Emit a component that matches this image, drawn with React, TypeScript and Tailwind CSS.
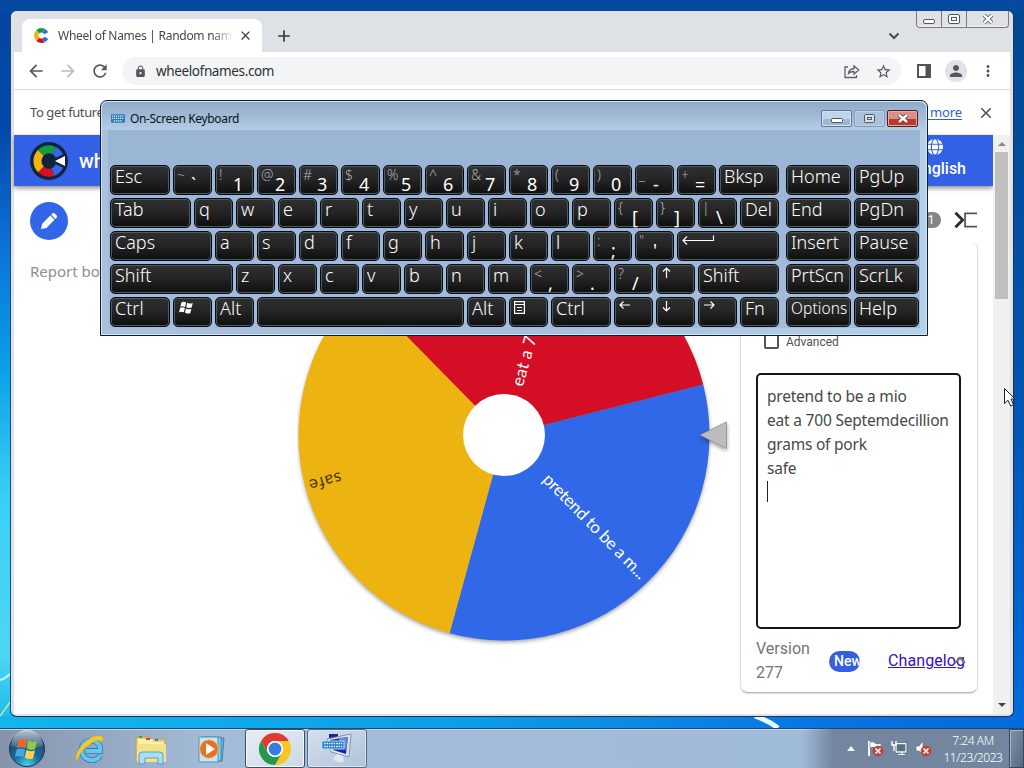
import React from "react";
import { MdArrowBack, MdArrowForward, MdRefresh, MdLock, MdStarBorder, MdPerson, MdMoreVert, MdClose, MdAdd } from "react-icons/md";

type KeyDef = { label?: string; top?: string; w?: string; icon?: React.ReactNode; small?: boolean };

const stroke = { fill: "none", stroke: "#fff", strokeWidth: 1.2 };

const arrow = (d: string) => (
  <svg className="absolute left-[4px] top-[1px] h-[14px] w-[14px]" viewBox="0 0 14 14" {...stroke}>
    <path d={d} />
  </svg>
);

const WinFlag = () => (
  <svg className="absolute left-[5px] top-[3px] h-[14px] w-[15px]" viewBox="0 0 16 15" fill="#fff">
    <path d="M2.5 1.5 Q5 .2 7.5 1.6 L6.5 6.3 Q4 5 1.4 6.2Z M8.7 2 Q11 3.4 14.7 2.1 L13.5 7 Q10.5 8.2 7.7 6.7Z M1.2 7.4 Q4 6.2 6.3 7.5 L5.2 12 Q3 10.8 0 12Z M7.4 8 Q10 9.4 13.2 8.2 L12 13 Q9 14 6.4 12.6Z" />
  </svg>
);

const MenuIcon = () => (
  <svg className="absolute left-[4px] top-[3px] h-[13px] w-[11px]" viewBox="0 0 11 13" {...stroke}>
    <path d="M.6 .6H10.4V12.4H.6ZM.6 3.5H10.4M3 6.5H8M3 9.5H8" />
  </svg>
);

const EnterIcon = () => (
  <svg className="absolute left-[4px] top-[3px] h-[12px] w-[33px]" viewBox="0 0 33 12" {...stroke}>
    <path d="M31.5 .5V5.5H1M5 1.5L1 5.5L5 9.5" />
  </svg>
);

const letters = (s: string): KeyDef[] => s.split("").map((label) => ({ label }));
const duo = (top: string, label: string): KeyDef => ({ top, label });

const rows: KeyDef[][] = [
  [{ label: "Esc", w: "w-[60px]" }, duo("~", "`"), duo("!", "1"), duo("@", "2"), duo("#", "3"), duo("$", "4"), duo("%", "5"), duo("^", "6"), duo("&", "7"), duo("*", "8"), duo("(", "9"), duo(")", "0"), duo("_", "-"), duo("+", "="), { label: "Bksp", w: "w-[60px]" }],
  [{ label: "Tab", w: "w-[81px]" }, ...letters("qwertyuiop"), duo("{", "["), duo("}", "]"), duo("|", "\\"), { label: "Del" }],
  [{ label: "Caps", w: "w-[102px]" }, ...letters("asdfghjkl"), duo(":", ";"), duo("\"", "'"), { w: "w-[102px]", icon: <EnterIcon /> }],
  [{ label: "Shift", w: "w-[123px]" }, ...letters("zxcvbnm"), duo("<", ","), duo(">", "."), duo("?", "/"), { icon: arrow("M5.5 12V2M2 5.5L5.5 2L9 5.5") }, { label: "Shift", w: "w-[81px]" }],
  [{ label: "Ctrl", w: "w-[60px]" }, { icon: <WinFlag /> }, { label: "Alt" }, { w: "w-[207px]" }, { label: "Alt" }, { icon: <MenuIcon /> }, { label: "Ctrl", w: "w-[60px]" }, { icon: arrow("M11 6H1M4.5 2.5L1 6L4.5 9.5") }, { icon: arrow("M5.5 2V12M2 8.5L5.5 12L9 8.5") }, { icon: arrow("M1 6H11M7.5 2.5L11 6L7.5 9.5") }, { label: "Fn" }],
];

const sideRows: string[][] = [["Home", "PgUp"], ["End", "PgDn"], ["Insert", "Pause"], ["PrtScn", "ScrLk"], ["Options", "Help"]];

function Key({ label, top, w = "w-[39px]", icon, small }: KeyDef) {
  return (
    <div className={`relative h-[30px] shrink-0 rounded-[5px] border border-[#050b12] bg-linear-to-b from-[#303030] via-[#242424] via-50% to-[#0e0e0e] font-light text-white shadow-[inset_0_0_0_1px_#4c5a62] ${w}`}>
      {top ? (
        <>
          <span className="absolute left-[3px] top-0 text-[14px] leading-[17px] text-[#b0b0b0]">{top}</span>
          <span className="absolute left-[17px] top-[8px] text-[18px] font-normal leading-[20px]">{label}</span>
        </>
      ) : (
        label && <span className={`absolute left-[4px] whitespace-nowrap ${small ? "-top-px text-[15.5px] leading-[23px] tracking-[0.1px]" : "-top-px text-[18px] leading-[23px]"}`}>{label}</span>
      )}
      {icon}
    </div>
  );
}

function KeyboardWindow() {
  return (
    <div className="absolute left-[100px] top-[100px] z-20 flex h-[236px] w-[828px] flex-col rounded-t-[7px] border border-[#0d1d30] bg-linear-to-r from-[#a9c1dc] via-[#a6bddb] to-[#b5d1e9] px-[7px] shadow-[inset_0_0_0_1px_#d5e4f3]">
      <div className="-mx-[6px] mt-px flex h-[28px] items-start rounded-t-[6px] bg-linear-to-b from-[#8faac8] to-[#b5cce5] pl-[9px] pt-[10px]">
        <svg className="mt-[2px] h-[9px] w-[14px]" viewBox="0 0 15 9">
          <rect width="15" height="9" rx="1" fill="#2f77c0" />
          <path d="M1 2H14M1 4.4H14M3 7H12" stroke="#d9ecff" strokeWidth="1.2" strokeDasharray="1.3 .8" />
        </svg>
        <span className="ml-[5px] text-[12px] leading-[13px] tracking-[-0.35px] text-[#0a1420]">On-Screen Keyboard</span>
        <div className="-mt-[2px] ml-auto mr-[8px] flex gap-[2px]">
          <div className="flex h-[17px] w-[31px] items-center justify-center rounded-[2px] border border-[#5d7693] bg-linear-to-b from-[#c2d4e8] from-50% to-[#9eb6d0] to-50% shadow-[inset_0_0_0_1px_#d6e3f1]">
            <svg className="mt-[3px] h-[5px] w-[12px]" viewBox="0 0 12 5"><rect x=".5" y=".5" width="11" height="4" rx="1" fill="#fff" stroke="#45566b" /></svg>
          </div>
          <div className="flex h-[17px] w-[31px] items-center justify-center rounded-[2px] border border-[#829ab5] bg-[#aac1da] shadow-[inset_0_0_0_1px_#bed1e5]">
            <svg className="h-[9px] w-[11px]" viewBox="0 0 11 9" fill="none" stroke="#4b5968"><rect x=".5" y=".5" width="10" height="8" rx="1" fill="#d7e0e9" /><rect x="3.5" y="3.5" width="4" height="2" /></svg>
          </div>
          <div className="flex h-[17px] w-[31px] items-center justify-center rounded-[2px] border border-[#4d1b20] bg-linear-to-b from-[#dc8e83] from-50% to-[#bd3828] to-50% shadow-[inset_0_0_0_1px_#e4aca5]">
            <svg className="h-[9px] w-[12px]" viewBox="0 0 12 9"><path d="M2 1L10 8M10 1L2 8" stroke="#4d3640" strokeWidth="4" /><path d="M2 1L10 8M10 1L2 8" stroke="#fff" strokeWidth="2.4" /></svg>
          </div>
        </div>
      </div>
      <div className="flex h-[198px] gap-[7px] bg-linear-to-b from-[#9ab4d3] to-[#a5bbdc] pl-[2px] pt-[35px]">
        <div className="flex w-[669px] flex-col gap-[3px]">
          {rows.map((row, i) => (
            <div key={i} className="flex gap-[3px]">{row.map((k, j) => <Key key={j} {...k} />)}</div>
          ))}
        </div>
        <div className="flex flex-col gap-[3px]">
          {sideRows.map((row) => (
            <div key={row[0]} className="flex gap-[3px]">{row.map((l) => <Key key={l} label={l} w="w-[65px]" small={l === "Options"} />)}</div>
          ))}
        </div>
      </div>
    </div>
  );
}

const Logo = ({ className, ring }: { className: string; ring?: boolean }) => (
  <svg className={className} viewBox="-19 -19 38 38">
    {ring && <circle r="19" fill="#10243c" />}
    <g fill="none" strokeWidth={ring ? 8 : 10}>
      <path d="M-8.2 -8.2A11.6 11.6 0 0 1 5 -10.5" stroke="#169b42" />
      <path d="M-8 8.4A11.6 11.6 0 0 1 -8.2 -8.2" stroke="#eeb211" />
      <path d="M4 10.9A11.6 11.6 0 0 1 -8 8.4" stroke="#d50f25" />
      <path d="M5 -10.5A11.6 11.6 0 0 1 10.5 -5M10.5 5A11.6 11.6 0 0 1 4 10.9" stroke="#3369e8" />
    </g>
    {ring ? <path d="M6 0L16 -5V5Z" fill="#fff" /> : <circle r="3" fill="#fff" />}
  </svg>
);

const Globe = () => (
  <svg className="-ml-[10px] mt-[1px] h-[16px] w-[16px]" viewBox="0 0 16 16">
    <circle cx="8" cy="8" r="8" fill="#fff" />
    <g fill="none" stroke="#3261e6" strokeWidth="1.1"><ellipse cx="8" cy="8" rx="3.6" ry="8.2" /><path d="M0 5.3H16M0 10.7H16" /></g>
  </svg>
);

function Tabs() {
  return (
    <div className="flex h-[41px] rounded-t-[5px] bg-[#dee1e6] pl-[8px]">
      <div className="relative mt-[8px] flex h-[33px] w-[240px] items-center rounded-t-[8px] bg-white pl-[11px]">
        <Logo className="h-[17px] w-[17px] shrink-0" />
        <span className="ml-[8px] w-[175px] overflow-hidden whitespace-nowrap text-[12px] tracking-[-0.28px] text-[#45494d] mask-r-from-88%">Wheel of Names | Random name picker</span>
        <MdClose className="ml-[5px] size-[15px] text-[#3c4043]" />
      </div>
      <MdAdd className="ml-[12px] mt-[15px] size-[20px] text-[#35383b]" />
      <svg className="ml-auto mt-[20px] h-[10px] w-[12px]" viewBox="0 0 12 10" fill="none" stroke="#45484c" strokeWidth="2"><path d="M1.5 2.5L6 7L10.5 2.5" /></svg>
      <div className="ml-[16px] mr-[1px] flex h-[17px] w-[93px] rounded-b-[4px] border border-t-0 border-[#777b80] shadow-[inset_0_-1px_0_#f4f4f4]">
        <div className="flex w-[25px] items-center justify-center border-r border-[#777b80] pt-[4px]">
          <svg className="h-[5px] w-[12px]" viewBox="0 0 12 5"><rect x=".5" y=".5" width="11" height="4" rx="1.5" fill="#fff" stroke="#555" /></svg>
        </div>
        <div className="flex w-[25px] items-center justify-center border-r border-[#777b80]">
          <svg className="h-[10px] w-[12px]" viewBox="0 0 12 10" fill="#fff" stroke="#555"><rect x=".5" y=".5" width="11" height="9" rx="1.5" /><rect x="3.5" y="3.5" width="5" height="3" /></svg>
        </div>
        <div className="flex flex-1 items-center justify-center">
          <svg className="h-[10px] w-[12px]" viewBox="0 0 12 10"><path d="M2 1L10 9M10 1L2 9" stroke="#666" strokeWidth="4" /><path d="M2 1L10 9M10 1L2 9" stroke="#fff" strokeWidth="2.3" /></svg>
        </div>
      </div>
    </div>
  );
}

function Toolbar() {
  return (
    <div className="flex h-[38px] items-center border-b border-[#d8dadd] bg-white pl-[12px] pr-[13px] pt-px text-[#55585c]">
      <MdArrowBack className="size-[20px]" />
      <MdArrowForward className="ml-[12px] size-[20px] text-[#bbbdc0]" />
      <MdRefresh className="ml-[12px] size-[20px]" />
      <div className="ml-[12px] flex h-[28px] w-[779px] items-center rounded-full bg-[#f3f4f5] pl-[12px] pr-[9px]">
        <MdLock className="size-[13px]" />
        <span className="ml-[9px] text-[13.5px] tracking-[-0.37px] text-[#2d3033]">wheelofnames.com</span>
        <svg className="ml-auto h-[15px] w-[16px]" viewBox="0 0 16 15" fill="none" stroke="#5f6368" strokeWidth="1.3">
          <path d="M4 3H1V13.5H12.5V11M4.5 9.5C4.8 6.5 6.8 4.8 10 4.5V2L14.8 6L10 10V7.5C7.5 7.4 6 8 4.5 9.5Z" />
        </svg>
        <MdStarBorder className="ml-[15px] size-[17px]" />
      </div>
      <svg className="ml-[16px] h-[14px] w-[14px]" viewBox="0 0 14 14"><rect x="1" y="1" width="12" height="12" fill="none" stroke="#505357" strokeWidth="2" /><rect x="8.5" width="5.5" height="14" fill="#505357" /></svg>
      <div className="ml-[14px] flex size-[22px] items-center justify-center rounded-full bg-[#dfe2e6]"><MdPerson className="size-[18px]" /></div>
      <MdMoreVert className="ml-auto size-[18px]" />
    </div>
  );
}

function Wheel() {
  return (
    <svg className="h-[528px] w-[443px] shrink-0" viewBox="297 186 443 528">
      <defs>
        <filter id="wheelShadow" x="-10%" y="-10%" width="120%" height="120%"><feDropShadow dx="0" dy="2" stdDeviation="2" floodColor="#000" floodOpacity=".4" /></filter>
      </defs>
      <circle cx="504" cy="435" r="205" fill="#888" filter="url(#wheelShadow)" />
      <path d="M504 435L703.2 384.5A205.5 205.5 0 0 1 449.6 633.2Z" fill="#3168e8" />
      <path d="M504 435L449.6 633.2A205.5 205.5 0 0 1 360 288.4Z" fill="#edb310" />
      <path d="M504 435L360 288.4A205.5 205.5 0 0 1 703.2 384.5Z" fill="#d40f25" />
      <circle cx="504" cy="435" r="41" fill="#fff" />
      <g fontFamily="Lato, sans-serif" fontSize="17">
        <text transform="translate(504 435) rotate(45.5)" x="59" y="5" fill="#fff" textLength="140">pretend to be a m...</text>
        <text transform="translate(504 435) rotate(-74.2)" x="51" y="5" fill="#fff" textLength="146">eat a 700 Septem...</text>
        <text transform="translate(504 435) rotate(165.6)" x="168" y="5" fill="#4a3804" textLength="33">safe</text>
      </g>
      <path d="M700 435L726.5 422V448.5Z" fill="#bcbcbc" stroke="#8a8a8a" strokeWidth=".7" filter="url(#wheelShadow)" />
    </svg>
  );
}

function EntryPanel() {
  return (
    <div className="flex w-[253px] flex-col">
      <div className="flex h-[56px] items-center justify-end pr-[15px] pt-[12px]">
        <span className="flex h-[16px] w-[20px] items-center justify-center rounded-full bg-[#858585] font-['Roboto',sans-serif] text-[12px] text-white">1</span>
        <svg className="ml-[13px] h-[18px] w-[24px]" viewBox="0 0 25 18" fill="none"><path d="M1.5 1.5L9 9L1.5 16.5" stroke="#2d2d2d" strokeWidth="3" /><path d="M24 2H11.5V16H24" stroke="#555" strokeWidth="1.8" /></svg>
      </div>
      <div className="flex h-[451px] w-[238px] flex-col rounded-[8px] border border-t-0 border-[#dedede] border-b-[#b5b5b5] px-[15px] shadow-[0_1px_2px_#ddd]">
        <div className="mt-[91px] flex h-[17px] items-center font-['Roboto',sans-serif] text-[12px] text-[#4f4f4f]">
          <span className="ml-[8px] mr-[7px] size-[15px] rounded-[2px] border-2 border-[#555]" />
          Advanced
        </div>
        <div className="mt-[23px] h-[256px] w-[205px] whitespace-nowrap rounded-[5px] border-2 border-[#161616] pl-[9px] pt-[9px] text-[15.5px] leading-[24px] tracking-[-0.22px] text-[#474747]">
          <div>pretend to be a mio</div>
          <div className="tracking-[-0.2px]">eat a 700 Septemdecillion</div>
          <div>grams of pork</div>
          <div>safe</div>
          <div className="mt-px h-[21px] w-px bg-[#222]" />
        </div>
        <div className="relative mt-[8px] flex items-center whitespace-nowrap font-['Roboto',sans-serif] text-[16px] leading-[24px] text-[#747474]">
          <div className="w-[73px] shrink-0">Version<br />277</div>
          <div className="h-[21px] w-[31px] shrink-0 overflow-hidden rounded-full bg-[#355fe0] pl-[5px] text-[14px] font-medium leading-[20px] text-white">New</div>
          <a className="ml-[28px] tracking-[0.1px] text-[#3511c4] underline">Changelog</a>
          <svg className="absolute right-[-5px] top-[19px] h-[8px] w-[14px]" viewBox="0 0 14 8" fill="none" stroke="#777" strokeWidth="2"><path d="M2 7L7 2L12 7" /></svg>
        </div>
      </div>
    </div>
  );
}

function Browser() {
  return (
    <div className="absolute left-[11px] top-[11px] flex h-[706px] w-[1003px] flex-col rounded-[6px] border-r border-b border-[#17335c] bg-[#dfe1e5] px-[3px] pb-[2px] shadow-[-1px_0_0_#1e4a82]">
      <div className="-mx-[3px] rounded-t-[6px] bg-[#dee1e6] px-[3px]"><Tabs /></div>
      <Toolbar />
      <div className="flex h-[45px] items-center bg-white pl-[16px] pr-[15px] text-[13px] tracking-[-0.4px] text-[#4b4e51] shadow-[0_1px_0_#d4d4d4]">
        <span className="w-[71px] overflow-hidden whitespace-nowrap">To get future</span>
        <a className="ml-auto tracking-[-0.1px] text-[#315fc6] underline underline-offset-2">Learn more</a>
        <MdClose className="ml-[15px] size-[18px] text-[#4e4e4e]" />
      </div>
      <div className="flex min-h-0 flex-1 bg-white">
        <div className="flex w-[979px] flex-col">
          <header className="flex h-[51px] shrink-0 items-center bg-[#3261e6] pl-[16px] pr-[27px] font-['Roboto',sans-serif] font-medium text-white shadow-[0_2px_5px_#888]">
            <Logo ring className="h-[38px] w-[38px]" />
            <span className="ml-[11px] text-[20px]">wheelofnames.com</span>
            <div className="-mt-[3px] ml-auto flex flex-col items-center gap-[2px] text-[16px] leading-[24px]"><Globe />English</div>
          </header>
          <div className="flex min-h-0 flex-1">
            <div className="flex w-[283px] shrink-0 flex-col pl-[16px] pt-[16px]">
              <div className="flex size-[38px] items-center justify-center rounded-full bg-[#3266e8]">
                <svg className="h-[18px] w-[18px]" viewBox="0 0 18 18" fill="#fff"><path d="M1 17L2.2 11.7L10.3 3.6L14.5 7.8L6.4 15.9ZM11.2 2.7L12.6 1.3Q13.5 .5 14.5 1.3L16.8 3.6Q17.6 4.5 16.8 5.5L15.4 6.9Z" /></svg>
              </div>
              <span className="mt-[19px] text-[15px] leading-[24px] text-[#8e8e8e]">Report board</span>
            </div>
            <Wheel />
            <EntryPanel />
          </div>
        </div>
        <div className="flex w-[17px] flex-col items-center bg-[#f0f0f0] py-[7px]">
          <svg className="h-[4px] w-[8px]" viewBox="0 0 8 4"><path d="M0 4L4 0L8 4Z" fill="#888" /></svg>
          <div className="mt-[6px] h-[147px] w-[13px] bg-[#bfbfbf]" />
          <svg className="mt-auto h-[4px] w-[8px]" viewBox="0 0 8 4"><path d="M0 0H8L4 4Z" fill="#444" /></svg>
        </div>
      </div>
    </div>
  );
}

const RedX = () => <g><circle cx="11" cy="11" r="5" fill="#d03b31" stroke="#9b4542" strokeWidth=".6" /><path d="M8.5 8.5L13.5 13.5M13.5 8.5L8.5 13.5" stroke="#fff" strokeWidth="1.6" /></g>;

function Taskbar() {
  return (
    <div className="relative z-10 flex h-[40px] items-center border-t border-[#264868] bg-linear-to-r from-[#8694ab] via-[#a3bbd8] via-[20%] to-[#a0bad9] to-[80%] shadow-[inset_0_1px_0_#c5d8e9]">
      <svg className="ml-[8px] h-[38px] w-[38px]" viewBox="0 0 38 38">
        <defs>
          <radialGradient id="orb" cx=".5" cy=".95" r=".85"><stop stopColor="#42d3ed" /><stop offset=".45" stopColor="#18699c" /><stop offset="1" stopColor="#274461" /></radialGradient>
          <linearGradient id="shine" x2="0" y2="1"><stop stopColor="#e9f3f8" stopOpacity=".75" /><stop offset="1" stopColor="#fff" stopOpacity=".08" /></linearGradient>
        </defs>
        <circle cx="19" cy="19" r="17.5" fill="url(#orb)" stroke="#20364d" />
        <path d="M3 16A16 16 0 0 1 35 16Q19 21 3 16Z" fill="url(#shine)" />
        <path d="M11 10Q15 8 19 10L17.5 18Q13 16 9 18Z" fill="#ef6428" />
        <path d="M20.3 10.5Q24 13 29 11L27 19Q23 21 18.8 18.5Z" fill="#91c848" />
        <path d="M8.5 19.5Q13 17.5 17 19.5L15.5 27Q12 25 7 27Z" fill="#45a8e4" />
        <path d="M18.4 20Q22 22 27 20.5L25 28.5Q21 30 16.8 27.5Z" fill="#ffd04a" />
      </svg>
      <svg className="ml-[28px] h-[32px] w-[31px]" viewBox="0 0 32 32" fill="none">
        <path d="M27 23C22 31 7 28 8 16C9 5 27 4 27 16V18H12" stroke="#2484bd" strokeWidth="6" />
        <path d="M27 23C22 31 7 28 8 16C9 5 27 4 27 16V18H12" stroke="#68c5ed" strokeWidth="4.2" />
        <path d="M3 29C-3 21 17 -2 29 3C31 4 30 7 28 10C28 1 6 15 3 29Z" fill="#f0ca34" stroke="#c8a11f" strokeWidth=".5" />
      </svg>
      <svg className="ml-[30px] mt-[2px] h-[30px] w-[32px]" viewBox="0 0 32 30">
        <path d="M1 2H13L15 4H30V26H1Z" fill="#e9cf74" stroke="#bd9d48" /><path d="M3 4H18V7H29V23H3Z" fill="#fff0ad" />
        <path d="M4 2H7" stroke="#38a44d" strokeWidth="2" /><path d="M11 4H15" stroke="#d6422e" strokeWidth="2" /><path d="M20 5H23" stroke="#3b80b1" strokeWidth="2" />
        <path d="M2 9H31V27H2Z" fill="#f7e08a" /><path d="M4 29V20Q4 17 8 17H25Q28 17 28 20V29H23V23H10V29Z" fill="#a9ddf1" stroke="#51a2c7" />
      </svg>
      <svg className="ml-[30px] mt-[1px] h-[28px] w-[29px]" viewBox="0 0 29 28">
        <path d="M9 3H27L25 26H9Z" fill="#67b9d9" stroke="#4081a3" /><path d="M5 2H24V26H5Z" fill="#86cee8" stroke="#458bb0" /><path d="M2 2H21V27H2Z" fill="#c5e5f2" stroke="#4e94b9" />
        <circle cx="12" cy="14" r="9.3" fill="#e8711d" stroke="#f8c391" strokeWidth=".8" /><path d="M9 8L18 14L9 20Z" fill="#fff" />
      </svg>
      <div className="ml-[19px] flex h-[39px] w-[60px] items-center justify-center rounded-[3px] border border-[#3c4d64] bg-linear-to-br from-[#e7edf5] to-[#ccd8e8] shadow-[inset_0_0_0_1px_#f5f8fc]">
        <svg className="h-[32px] w-[32px]" viewBox="-16 -16 32 32">
          <path d="M-13.86 -8A16 16 0 0 1 13.86 -8L0 -8A8 8 0 0 0 -6.93 4Z" fill="#df3b30" />
          <path d="M13.86 -8A16 16 0 0 1 0 16L6.93 4A8 8 0 0 0 0 -8Z" fill="#f9c721" />
          <path d="M0 16A16 16 0 0 1 -13.86 -8L-6.93 4A8 8 0 0 0 6.93 4Z" fill="#239a4b" />
          <circle r="8" fill="#fff" /><circle r="6.4" fill="#377de2" />
        </svg>
      </div>
      <div className="ml-[2px] flex h-[39px] w-[60px] items-center justify-center rounded-[3px] border border-[#566981] bg-linear-to-br from-[#d5dfec] to-[#b0c2da] shadow-[inset_0_0_0_1px_#d7e4f1]">
        <svg className="h-[32px] w-[32px]" viewBox="0 0 32 32">
          <path d="M8 1H17V8H8Z" fill="#17279a" /><path d="M6 6L30 1L28 24L10 19Z" fill="#dce5ef" stroke="#8595aa" /><path d="M9 7L27 4L25 21L12 17Z" fill="#1526aa" /><path d="M17 5L27 4L25 18Z" fill="#6688dc" />
          <rect x="1" y="8" width="22" height="8" fill="#2379bf" stroke="#b6e0fa" /><path d="M3 10.5H22M3 13.5H22" stroke="#e6f5ff" strokeWidth="1.3" strokeDasharray="1.6 .8" /><path d="M16 21L22 23L23 28Q18 32 12 26Z" fill="#e2e7ed" />
        </svg>
      </div>
      <div className="ml-auto flex h-full items-center bg-linear-to-r from-[#a0bad900] to-[#74869f] to-[14%] pl-[45px]">
        <svg className="mr-[12px] h-[5px] w-[8px]" viewBox="0 0 8 5"><path d="M0 5L4 0L8 5Z" fill="#f4f7fa" /></svg>
        <svg className="h-[17px] w-[17px]" viewBox="0 0 17 17"><path d="M2 1V16" stroke="#f5f5f5" strokeWidth="2" /><path d="M3 2Q6 1 8 3T14 3V9Q10 10 8 8T3 8Z" fill="#fff" stroke="#555" strokeWidth=".5" /><RedX /></svg>
        <svg className="ml-[7px] h-[17px] w-[17px]" viewBox="0 0 17 17"><path d="M5 3.5H15V12H5ZM7 14.5H14M11 12V15" fill="#5a6c80" stroke="#3a4654" strokeWidth="2.6" /><path d="M5 3.5H15V12H5ZM7 14.5H14M11 12V15" fill="#5a6c80" stroke="#f2f6fa" strokeWidth="1.3" /><path d="M1 1V5H5V1M3 5V11" fill="none" stroke="#fff" strokeWidth="1.4" /></svg>
        <svg className="ml-[7px] h-[17px] w-[17px]" viewBox="0 0 17 17"><path d="M1 6H4L8 1V15L4 11H1Z" fill="#f8f8f8" stroke="#555" strokeWidth=".5" /><RedX /></svg>
        <div className="ml-[9px] w-[64px] whitespace-nowrap text-center text-[12px] font-light leading-[17px] tracking-[-0.4px] text-white">7:24 AM<br />11/23/2023</div>
        <div className="ml-[4px] h-[39px] w-[15px] border border-[#354961] bg-linear-to-br from-[#8292a6] to-[#566a83] shadow-[inset_1px_1px_0_#a6b5c5]" />
      </div>
    </div>
  );
}

export default function App() {
  return (
    <main className="relative flex h-[768px] w-[1024px] flex-col overflow-hidden bg-[#0750ae] font-['Noto_Sans',sans-serif]">
      <div className="relative flex-1">
        <svg className="h-[728px] w-[1024px]" viewBox="0 0 1024 728">
          <defs>
            <linearGradient id="left" x2="0" y2="1"><stop stopColor="#0544a0" /><stop offset=".18" stopColor="#0449aa" /><stop offset=".34" stopColor="#0b72d8" /><stop offset=".5" stopColor="#0a9ee8" /><stop offset=".68" stopColor="#38cff5" /><stop offset=".9" stopColor="#4cd6f2" /><stop offset="1" stopColor="#16b6ee" /></linearGradient>
            <linearGradient id="right" x2="0" y2="1"><stop stopColor="#00488f" /><stop offset=".5" stopColor="#0053ac" /><stop offset="1" stopColor="#006cdc" /></linearGradient>
            <linearGradient id="bottom"><stop stopColor="#12b5ed" /><stop offset=".45" stopColor="#0d9ee9" /><stop offset=".8" stopColor="#0875e3" /><stop offset="1" stopColor="#006cdc" /></linearGradient>
          </defs>
          <rect width="512" height="728" fill="url(#left)" /><rect x="512" width="512" height="728" fill="url(#right)" />
          <rect width="1024" height="11" fill="#06499f" /><rect y="716" width="1024" height="12" fill="url(#bottom)" />
          <path d="M0 716Q6 708 11 701" stroke="#bdf094" strokeWidth="1.5" fill="none" /><path d="M0 680Q5 679 10 674" stroke="#c8f2fb" strokeWidth="2" fill="none" /><path d="M755 716Q769 721 778 728" stroke="#e8f8ff" strokeWidth="5" fill="none" />
        </svg>
        <Browser />
        <KeyboardWindow />
        <svg className="absolute left-[1003px] top-[387px] h-[21px] w-[14px]" viewBox="0 0 14 21"><path d="M1.5 1.5V16.5L5 13.3L7.7 19L10.5 17.8L8 12H12Z" fill="#fff" stroke="#222" /></svg>
      </div>
      <Taskbar />
    </main>
  );
}
